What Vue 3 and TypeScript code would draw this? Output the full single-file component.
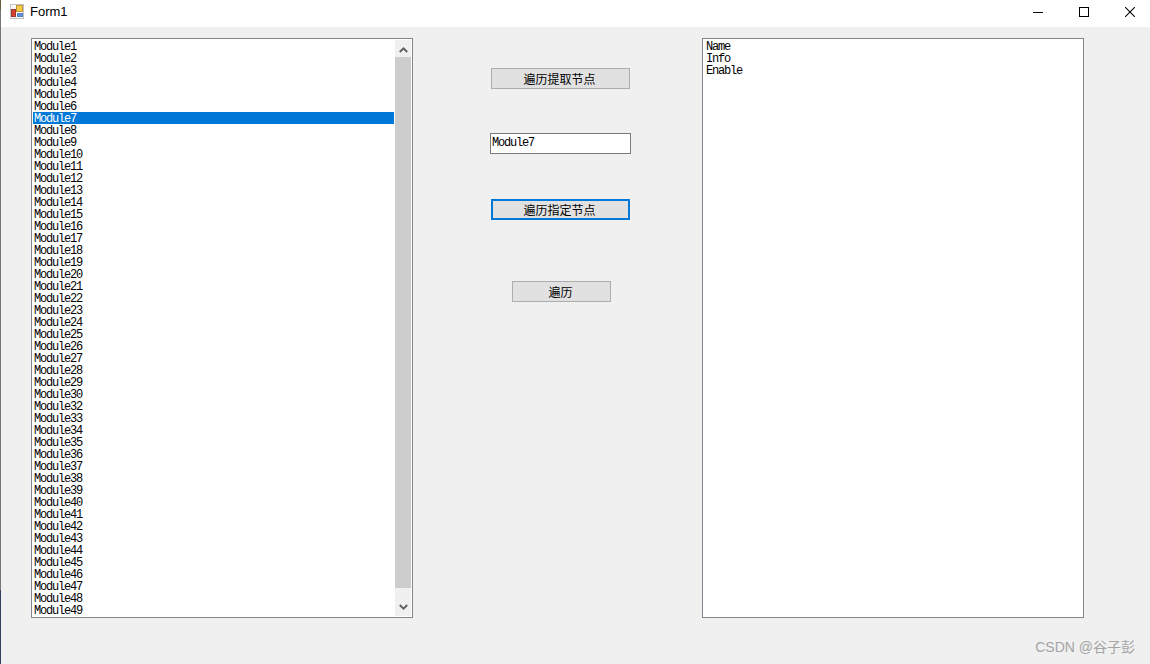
<template>
  <div class="window">
    <header class="titlebar">
      <svg class="form-icon" width="14" height="15" viewBox="0 0 14 15">
        <rect x="0.5" y="0.5" width="13" height="14" fill="#fafafa" stroke="#c4c4c4" />
        <rect x="6.5" y="1.5" width="6" height="6" fill="#f8cc48" stroke="#c09430" />
        <rect x="1.5" y="5.5" width="4" height="7" fill="#d84030" stroke="#983830" />
        <rect x="7.5" y="9.5" width="5" height="3" fill="#6090d8" stroke="#5880c0" />
      </svg>
      <span class="title">Form1</span>
      <div class="caption">
        <button class="cap-btn" type="button" aria-label="minimize">
          <svg width="10" height="10" viewBox="0 0 10 10"><path d="M0 5.5h10" stroke="#000" fill="none" /></svg>
        </button>
        <button class="cap-btn" type="button" aria-label="maximize">
          <svg width="10" height="10" viewBox="0 0 10 10"><rect x="0.5" y="0.5" width="9" height="9" stroke="#000" fill="none" /></svg>
        </button>
        <button class="cap-btn" type="button" aria-label="close">
          <svg width="10" height="10" viewBox="0 0 10 10"><path d="M0 0l10 10M10 0L0 10" stroke="#000" fill="none" stroke-width="1.05" /></svg>
        </button>
      </div>
    </header>

    <main class="client">
      <div class="listbox module-list">
        <ul class="rows">
          <li v-for="m in modules" :key="m" class="row" :class="{ selected: m === selected }">{{ m }}</li>
        </ul>
        <div class="scrollbar">
          <div class="sb-btn up">
            <svg width="9" height="6" viewBox="0 0 9 6"><path d="M0.8 5L4.5 1.4L8.2 5" stroke="#606060" stroke-width="2" fill="none" /></svg>
          </div>
          <div class="sb-thumb"></div>
          <div class="sb-btn down">
            <svg width="9" height="6" viewBox="0 0 9 6"><path d="M0.8 1L4.5 4.6L8.2 1" stroke="#606060" stroke-width="2" fill="none" /></svg>
          </div>
        </div>
      </div>

      <div class="actions">
        <button class="btn wide" type="button">遍历提取节点</button>
        <input class="node-input" v-model="selected" />
        <button class="btn wide focused" type="button">遍历指定节点</button>
        <button class="btn small" type="button">遍历</button>
      </div>

      <div class="listbox attr-list">
        <ul class="rows">
          <li v-for="a in attrs" :key="a" class="row">{{ a }}</li>
        </ul>
      </div>
    </main>

    <div class="edge"></div>
    <div class="watermark">CSDN @谷子彭</div>
  </div>
</template>

<script setup lang="ts">
import { ref } from 'vue'

// Module31 fehlt im Original
const modules: string[] = []
for (let i = 1; i <= 49; i++) {
  if (i !== 31) modules.push('Module' + i)
}

const attrs = ['Name', 'Info', 'Enable']
const selected = ref('Module7')
</script>

<style>
html,
body {
  margin: 0;
  background: #f0f0f0;
}
</style>

<style scoped>
.window {
  position: relative;
  width: 1150px;
  height: 664px;
  overflow: hidden;
  background: #f0f0f0;
  font-family: "Liberation Mono", "Noto Sans CJK SC", monospace;
}

/* schmaler Streifen vom Desktop am linken Rand */
.edge {
  position: absolute;
  left: 0;
  top: 0;
  bottom: 0;
  width: 1px;
  background: linear-gradient(#6b5a3c 0 10px, #777 10px 590px, #33405f 590px);
}

.titlebar {
  display: flex;
  align-items: center;
  box-sizing: border-box;
  height: 27px;
  background: #fff;
  padding: 0 0 4px 10px;
}

.form-icon {
  flex: none;
  margin-right: 6px;
}

.title {
  font-family: "Liberation Sans", "Noto Sans", sans-serif;
  font-size: 13px;
  color: #000;
}

.caption {
  display: flex;
  margin-left: auto;
  margin-right: -3px;
}

.cap-btn {
  display: flex;
  align-items: center;
  justify-content: center;
  width: 46px;
  height: 23px;
  padding: 0;
  border: none;
  background: none;
}

.client {
  display: flex;
  align-items: flex-start;
  padding: 11px 0 0 31px;
}

.listbox {
  display: flex;
  box-sizing: border-box;
  width: 382px;
  height: 580px;
  background: #fff;
  border: 1px solid #828790;
  padding: 1px;
}

.rows {
  flex: 1;
  list-style: none;
  margin: 0;
  padding: 0;
}

.row {
  box-sizing: border-box;
  height: 12px;
  padding: 2px 0 0 1px;
  line-height: 10px;
  font-size: 12px;
  letter-spacing: -1.2px;
  color: #000;
  white-space: nowrap;
}

.attr-list .row {
  padding-left: 2px;
}

.row.selected {
  background: #0078d7;
  color: #fff;
}

.scrollbar {
  display: flex;
  flex-direction: column;
  flex: none;
  width: 16px;
  margin-left: 1px;
  background: #f0f0f0;
}

.sb-btn {
  display: flex;
  align-items: center;
  justify-content: center;
  flex: none;
}

.sb-btn.up {
  height: 17px;
  padding-top: 3px;
  box-sizing: border-box;
}

.sb-btn.down {
  height: 28px;
  padding-top: 10px;
  box-sizing: border-box;
}

.sb-thumb {
  flex: 1;
  background: #cdcdcd;
}

.actions {
  display: flex;
  flex-direction: column;
  align-items: center;
  flex: none;
  width: 141px;
  margin: 0 71px 0 77px;
  padding-top: 30px;
}

.btn {
  box-sizing: border-box;
  height: 21px;
  padding: 0 2px 1px 0;
  background: #e1e1e1;
  border: 1px solid #adadad;
  font-family: "Noto Sans CJK SC", sans-serif;
  font-size: 12px;
  line-height: 17px;
  color: #000;
}

.btn.wide {
  width: 139px;
}

.btn.small {
  width: 99px;
  margin-top: 61px;
  margin-left: 1px;
  padding-right: 1px;
}

.btn.focused {
  border: 2px solid #0078d7;
  margin-top: 45px;
}

.node-input {
  box-sizing: border-box;
  width: 141px;
  height: 21px;
  margin-top: 44px;
  padding: 0 1px 2px;
  background: #fff;
  border: 1px solid #7a7a7a;
  border-radius: 0;
  outline: none;
  font-family: "Liberation Mono", monospace;
  font-size: 12px;
  letter-spacing: -1.2px;
  color: #000;
}

.watermark {
  position: absolute;
  right: 15px;
  bottom: 8px;
  font-family: "Liberation Sans", "Noto Sans CJK SC", sans-serif;
  font-size: 14px;
  color: #a4a4a4;
}
</style>
